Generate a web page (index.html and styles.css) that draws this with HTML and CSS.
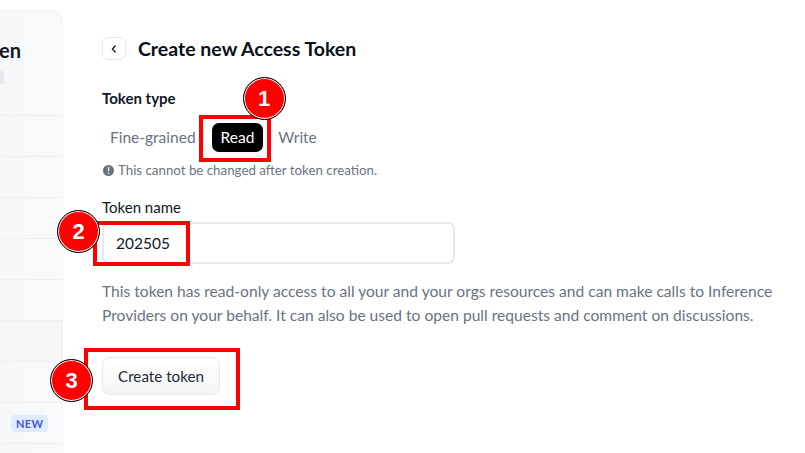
FILE: index.html
```html
<!DOCTYPE html>
<html lang="en">
<head>
<meta charset="utf-8">
<title>Create new Access Token</title>
<link rel="stylesheet" href="styles.css">
</head>
<body>
<div class="page">
  <aside class="sidebar">
    <div class="side-head">
      <div class="side-title">en</div>
      <div class="side-badge"></div>
    </div>
    <ul class="side-list">
      <li></li>
      <li></li>
      <li></li>
      <li></li>
      <li></li>
      <li class="active"></li>
      <li></li>
      <li><span class="new">NEW</span></li>
    </ul>
  </aside>
  <main class="main">
    <div class="heading">
      <button class="back" aria-label="Back">
        <svg width="10" height="10" viewBox="0 0 10 10"><path d="M6.2 2 L3.4 5 L6.2 8" fill="none" stroke="#111827" stroke-width="1.3" stroke-linecap="round" stroke-linejoin="round"/></svg>
      </button>
      <h1>Create new Access Token</h1>
    </div>

    <div class="field">
      <div class="label-bold">Token type</div>
      <div class="toggle">
        <span class="opt">Fine-grained</span>
        <span class="opt selected">Read
          <span class="mark box1"></span>
          <span class="num n1">1</span>
        </span>
        <span class="opt">Write</span>
      </div>
      <div class="note"><span class="info">!</span>This cannot be changed after token creation.</div>
    </div>

    <div class="field name-field">
      <div class="label">Token name</div>
      <div class="input-wrap">
        <input class="input" value="202505">
        <span class="mark box2"></span>
        <span class="num n2">2</span>
      </div>
    </div>

    <p class="desc">This token has read-only access to all your and your orgs resources and can make calls to Inference Providers on your behalf. It can also be used to open pull requests and comment on discussions.</p>

    <div class="btn-wrap">
      <button class="btn">Create token</button>
      <span class="mark box3"></span>
      <span class="num n3">3</span>
    </div>
  </main>
</div>
</body>
</html>
```
FILE: styles.css
```css
* { box-sizing: border-box; }
html, body { margin: 0; padding: 0; background: #fff; }
body {
  font-family: "Source Sans Pro", Lato, "Noto Sans", sans-serif;
  color: #111827;
  width: 805px;
  height: 453px;
  overflow: hidden;
}
.page { display: flex; height: 453px; }

.sidebar {
  width: 63px;
  flex: none;
  margin-top: 10px;
  background: linear-gradient(to right, #f6f7f9, #f9fafb);
  border-right: 1px solid #f0f1f3;
  border-top: 1px solid #f3f4f6;
  border-top-right-radius: 12px;
  overflow: hidden;
}
.side-head { height: 105px; padding-top: 27px; border-bottom: 1px solid #eceef1; }
.side-title { font-weight: 700; font-size: 20px; margin-left: -1px; line-height: 24px; }
.side-badge { width: 4px; height: 13px; background: #e5e7eb; border-radius: 0 3px 3px 0; margin-top: 9px; }
.side-list { list-style: none; margin: 0; padding: 0; }
.side-list li { height: 41px; border-bottom: 1px solid #eceef1; display: flex; align-items: center; }
.side-list li.active { background: #f5f6f8; }
.new {
  margin-left: 11px;
  background: #e0ebff;
  color: #3b5bdb;
  font-size: 11px;
  font-weight: 700;
  padding: 2px 5px;
  border-radius: 4px;
  letter-spacing: 0.3px;
}

.main { padding: 37px 0 0 39px; flex: 1; position: relative; }
.heading { display: flex; align-items: center; gap: 12px; height: 23px; }
.back {
  width: 24px; height: 23px;
  border: 1px solid #e5e7eb;
  border-radius: 6px;
  background: #fff;
  display: flex; align-items: center; justify-content: center;
  padding: 0;
}
h1 { margin: 0; font-size: 19.5px; font-weight: 700; color: #0b0f19; }

.field { margin-top: 28px; }
.label-bold { font-weight: 700; font-size: 15px; line-height: 20px; }
.toggle { display: flex; align-items: center; gap: 7px; margin-top: 14px; height: 30px; }
.opt { position: relative; font-size: 15.5px; color: #6b7280; padding: 4px 8px; line-height: 21px; }
.opt.selected { background: #000; color: #fff; border-radius: 7px; padding: 4px 9px; margin-left: 1px; }
.note { display: flex; align-items: center; gap: 4px; font-size: 13.3px; color: #6b7280; margin-top: 10px; }
.info {
  width: 11px; height: 11px; border-radius: 50%;
  background: #6b7280; color: #fff;
  font-size: 9px; font-weight: 700;
  display: inline-flex; align-items: center; justify-content: center;
  margin-left: 1px;
}

.name-field { margin-top: 19px; }
.label { font-size: 15px; line-height: 20px; color: #111827; }
.input-wrap { position: relative; width: 353px; margin-top: 5px; }
.input {
  display: block;
  width: 353px; height: 42px;
  border: 2px solid #e8e9ee;
  border-radius: 7px;
  padding: 0 12px;
  font-family: inherit;
  font-size: 15.5px;
  color: #111827;
  background: #fff;
  outline: none;
}

.desc {
  margin: 15px 0 0;
  font-size: 15.6px;
  line-height: 24px;
  color: #6b7280;
  max-width: 700px;
}

.btn-wrap { position: relative; width: 118px; margin-top: 30px; }
.btn {
  width: 118px; height: 38px;
  border: 1px solid #e5e7eb;
  border-radius: 8px;
  background: linear-gradient(to bottom, #ffffff, #f3f4f6);
  font-family: inherit;
  font-size: 15.2px;
  color: #1f2937;
  padding: 0;
}

.mark { position: absolute; border: 4px solid #ff0000; pointer-events: none; }
.box1 { left: -13px; top: -8px; width: 72px; height: 47px; }
.box2 { left: -9px; top: -1px; width: 97px; height: 45px; }
.box3 { left: -18px; top: -9px; width: 156px; height: 62px; }

.num {
  position: absolute;
  width: 43px; height: 43px;
  border-radius: 50%;
  background: #ff0000;
  border: 1.5px solid #000;
  box-shadow: inset 0 0 0 1px #fff;
  color: #fff;
  font-family: "Liberation Sans", Arial, sans-serif;
  font-weight: 700;
  font-size: 22px;
  display: flex; align-items: center; justify-content: center;
}
.n1 { left: 31px; top: -46px; }
.n2 { left: -45px; top: -12px; }
.n3 { left: -52px; top: 2px; }
```
